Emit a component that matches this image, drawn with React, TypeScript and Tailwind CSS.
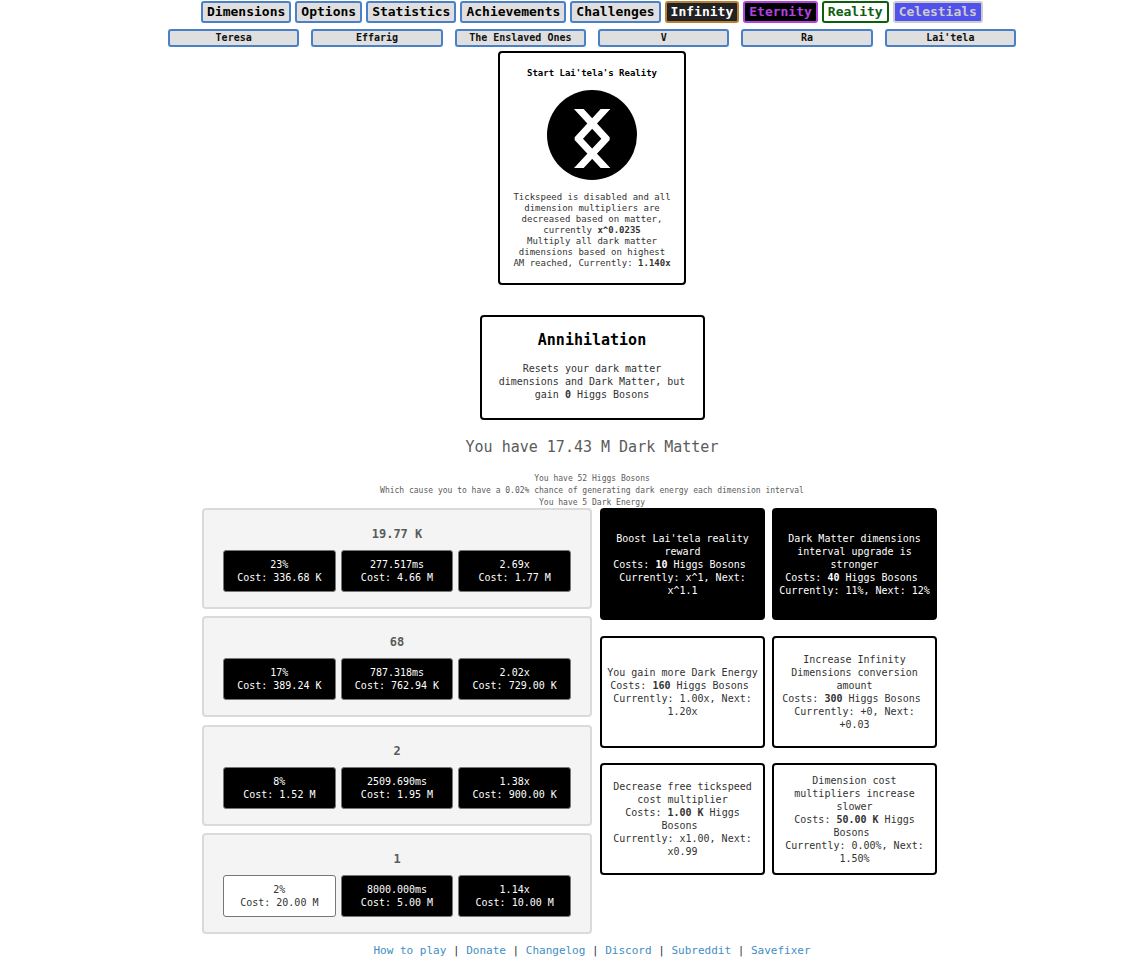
import type { ReactNode } from "react";

const tabs = [
  { label: "Dimensions", style: "border-[#4a80c8] bg-[#dfdfdf] text-black" },
  { label: "Options", style: "border-[#4a80c8] bg-[#dfdfdf] text-black" },
  { label: "Statistics", style: "border-[#4a80c8] bg-[#dfdfdf] text-black" },
  { label: "Achievements", style: "border-[#4a80c8] bg-[#dfdfdf] text-black" },
  { label: "Challenges", style: "border-[#4a80c8] bg-[#dfdfdf] text-black" },
  { label: "Infinity", style: "border-[#b67f33] bg-[#222222] text-white" },
  { label: "Eternity", style: "border-[#b341e0] bg-black text-[#b341e0]" },
  { label: "Reality", style: "border-[#0b600e] bg-white text-[#0b600e]" },
  { label: "Celestials", style: "border-[#cccccc] bg-[#5151ec] text-[#cccccc]" },
];

const subtabs = ["Teresa", "Effarig", "The Enslaved Ones", "V", "Ra", "Lai'tela"];

type Upgrade = { top: string; cost: string; affordable: boolean };

const dimensions: { amount: string; upgrades: Upgrade[] }[] = [
  {
    amount: "19.77 K",
    upgrades: [
      { top: "23%", cost: "336.68 K", affordable: false },
      { top: "277.517ms", cost: "4.66 M", affordable: false },
      { top: "2.69x", cost: "1.77 M", affordable: false },
    ],
  },
  {
    amount: "68",
    upgrades: [
      { top: "17%", cost: "389.24 K", affordable: false },
      { top: "787.318ms", cost: "762.94 K", affordable: false },
      { top: "2.02x", cost: "729.00 K", affordable: false },
    ],
  },
  {
    amount: "2",
    upgrades: [
      { top: "8%", cost: "1.52 M", affordable: false },
      { top: "2509.690ms", cost: "1.95 M", affordable: false },
      { top: "1.38x", cost: "900.00 K", affordable: false },
    ],
  },
  {
    amount: "1",
    upgrades: [
      { top: "2%", cost: "20.00 M", affordable: true },
      { top: "8000.000ms", cost: "5.00 M", affordable: false },
      { top: "1.14x", cost: "10.00 M", affordable: false },
    ],
  },
];

const higgsUpgrades = [
  { text: "Boost Lai'tela reality reward", cost: "10", effect: "Currently: x^1, Next: x^1.1", dark: true },
  { text: "Dark Matter dimensions interval upgrade is stronger", cost: "40", effect: "Currently: 11%, Next: 12%", dark: true },
  { text: "You gain more Dark Energy", cost: "160", effect: "Currently: 1.00x, Next: 1.20x", dark: false },
  { text: "Increase Infinity Dimensions conversion amount", cost: "300", effect: "Currently: +0, Next: +0.03", dark: false },
  { text: "Decrease free tickspeed cost multiplier", cost: "1.00 K", effect: "Currently: x1.00, Next: x0.99", dark: false },
  { text: "Dimension cost multipliers increase slower", cost: "50.00 K", effect: "Currently: 0.00%, Next: 1.50%", dark: false },
];

const links = ["How to play", "Donate", "Changelog", "Discord", "Subreddit", "Savefixer"];

function Strong({ children }: { children: ReactNode }) {
  return <b className="font-bold">{children}</b>;
}

function LaitelaRune() {
  return (
    <svg viewBox="0 0 270 270" className="mt-[9px] size-[90px]" aria-hidden="true">
      <circle cx="135" cy="135" r="135" fill="#000" />
      <path d="M81 57h29l78 85v8l-78 84H81l82-88z" fill="#fff" />
      <path d="M190 57h-29l-78 85v8l78 84h29l-82-88z" fill="#fff" />
    </svg>
  );
}

function DimensionPanel({ amount, upgrades }: { amount: string; upgrades: Upgrade[] }) {
  return (
    <section className="rounded-[4px] border-2 border-[#dadada] bg-[#f4f4f4] px-[19px] pt-4 pb-[15px]">
      <h2 className="text-xs leading-4 font-bold text-[#5b5b5b]">{amount}</h2>
      <div className="mt-2 grid grid-cols-3 gap-[5px]">
        {upgrades.map((u) => (
          <button
            key={u.top}
            className={`h-[42px] rounded-[3px] border border-[#777777] text-[10px] leading-[13px] ${
              u.affordable ? "bg-white text-[#333333]" : "bg-black text-white"
            }`}
          >
            {u.top}
            <br />
            Cost: {u.cost}
          </button>
        ))}
      </div>
    </section>
  );
}

export default function App() {
  return (
    <div className="bg-white pl-[39px] text-center font-['DejaVu_Sans_Mono','Liberation_Mono',monospace] text-[#333333]">
      <nav className="flex justify-center gap-1 pt-px">
        {tabs.map((t) => (
          <button key={t.label} className={`h-[22px] rounded-[3px] border-2 px-1 text-[13px] leading-[18px] font-bold ${t.style}`}>
            {t.label}
          </button>
        ))}
      </nav>
      <nav className="mx-auto mt-1.5 grid max-w-[848px] grid-cols-6 gap-3">
        {subtabs.map((s) => (
          <button key={s} className="h-[18px] rounded-[3px] border-2 border-[#4a80c8] bg-[#dfdfdf] text-[10px] leading-[14px] font-bold text-[#111111]">
            {s}
          </button>
        ))}
      </nav>

      <main>
        <button className="mx-auto mt-1 flex w-[188px] flex-col items-center rounded-[4px] border-2 border-black bg-white px-3 pt-3 pb-[14px] text-[9px] leading-[11px]">
          <span className="leading-4 font-bold text-black">Start Lai'tela's Reality</span>
          <LaitelaRune />
          <span className="mt-3">
            Tickspeed is disabled and all dimension multipliers are decreased based on matter, currently{" "}
            <Strong>x^0.0235</Strong>
            <br />
            Multiply all dark matter dimensions based on highest AM reached, Currently: <Strong>1.140x</Strong>
          </span>
        </button>

        <button className="mx-auto mt-[30px] block w-[225px] rounded-[4px] border-2 border-black bg-white px-3 pt-[13px] pb-[17px] text-[10px] leading-[13px]">
          <span className="block text-[15px] leading-5 font-bold text-black">Annihilation</span>
          <span className="mt-3 block">
            Resets your dark matter dimensions and Dark Matter, but gain <Strong>0</Strong> Higgs Bosons
          </span>
        </button>

        <p className="mt-[17px] text-[15px] leading-5 text-[#5b5b5b]">You have 17.43 M Dark Matter</p>
        <div className="mt-4 -mb-px text-[8px] leading-3 text-[#5b5b5b]">
          <p>You have 52 Higgs Bosons</p>
          <p>Which cause you to have a 0.02% chance of generating dark energy each dimension interval</p>
          <p>You have 5 Dark Energy</p>
        </div>

        <div className="flex items-start justify-center gap-2 pr-[45px]">
          <div className="flex min-h-[426px] w-[390px] flex-col justify-between">
            {dimensions.map((d) => (
              <DimensionPanel key={d.amount} {...d} />
            ))}
          </div>
          <div className="grid min-h-[367px] w-[337px] grid-cols-2 content-between gap-x-[7px]">
            {higgsUpgrades.map((u) => (
              <button
                key={u.text}
                className={`h-[112px] rounded-[4px] border-2 border-black px-1 text-[10px] leading-[13px] ${
                  u.dark ? "bg-black text-white" : "bg-white text-[#333333]"
                }`}
              >
                {u.text}
                <br />
                Costs: <Strong>{u.cost}</Strong> Higgs Bosons&nbsp;
                <br />
                {u.effect}
              </button>
            ))}
          </div>
        </div>
      </main>

      <footer className="mt-[9px] pb-1 text-[11px] leading-4">
        {links.map((l, i) => (
          <span key={l}>
            {i > 0 && " | "}
            <a href="#" className="text-[#3f8ec4]">
              {l}
            </a>
          </span>
        ))}
      </footer>
    </div>
  );
}
